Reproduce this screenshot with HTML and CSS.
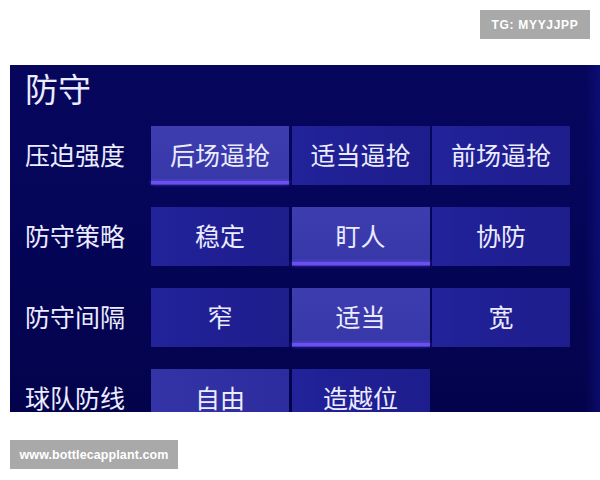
FILE: index.html
```html
<!DOCTYPE html>
<html lang="zh">
<head>
<meta charset="utf-8">
<link rel="stylesheet" href="styles.css">
</head>
<body>
<div class="top">
  <div class="badge tg">TG: MYYJJPP</div>
</div>
<div class="panel">
  <div class="title">防守</div>
  <div class="rows">
    <div class="row">
      <div class="label">压迫强度</div>
      <div class="opts">
        <div class="opt sel">后场逼抢</div>
        <div class="opt">适当逼抢</div>
        <div class="opt">前场逼抢</div>
      </div>
    </div>
    <div class="row">
      <div class="label">防守策略</div>
      <div class="opts">
        <div class="opt">稳定</div>
        <div class="opt sel">盯人</div>
        <div class="opt">协防</div>
      </div>
    </div>
    <div class="row">
      <div class="label">防守间隔</div>
      <div class="opts">
        <div class="opt">窄</div>
        <div class="opt sel">适当</div>
        <div class="opt">宽</div>
      </div>
    </div>
    <div class="row">
      <div class="label">球队防线</div>
      <div class="opts">
        <div class="opt alt">自由</div>
        <div class="opt">造越位</div>
      </div>
    </div>
  </div>
</div>
<div class="bottom">
  <div class="badge site">www.bottlecapplant.com</div>
</div>
</body>
</html>
```
FILE: styles.css
```css
html, body {
  margin: 0;
  padding: 0;
  background: #ffffff;
  width: 600px;
  height: 480px;
  overflow: hidden;
}

.top {
  height: 65px;
  box-sizing: border-box;
  padding: 10px 10px 0 0;
  display: flex;
  justify-content: flex-end;
  align-items: flex-start;
}

.badge {
  background: #a9a9a9;
  color: #ffffff;
  font-family: "Liberation Sans", Arial, sans-serif;
  display: flex;
  align-items: center;
  justify-content: center;
}

.tg {
  width: 110px;
  height: 29px;
  font-size: 12px;
  font-weight: bold;
  letter-spacing: 0.7px;
}

.site {
  width: 168px;
  height: 29px;
  font-size: 12.5px;
  font-weight: bold;
  letter-spacing: 0.1px;
}

.bottom {
  padding: 28px 0 0 10px;
}

.panel {
  margin-left: 10px;
  width: 590px;
  height: 347px;
  box-sizing: border-box;
  overflow: hidden;
  padding: 0 0 0 15px;
  background:
    linear-gradient(90deg, rgba(0,0,0,0) 97.5%, rgba(20,20,140,0.5) 100%),
    linear-gradient(180deg, #06065d 0%, #05055a 40%, #03034c 100%);
  font-family: "Noto Sans CJK SC", "Noto Sans", sans-serif;
  font-weight: 400;
  color: #ececff;
}

.title {
  margin-top: 3px;
  height: 40px;
  line-height: 40px;
  font-size: 33px;
  margin-bottom: 18px;
}

.rows {
  display: flex;
  flex-direction: column;
  gap: 22px;
}

.row {
  display: flex;
  align-items: center;
  height: 59px;
  flex: none;
}

.label {
  width: 126px;
  font-size: 25px;
  line-height: 30px;
  padding-bottom: 3px;
}

.opts {
  display: flex;
  gap: 2.5px;
}

.opt {
  position: relative;
  width: 138px;
  height: 59px;
  box-sizing: border-box;
  padding-bottom: 3px;
  display: flex;
  align-items: center;
  justify-content: center;
  font-size: 25px;
  background: linear-gradient(90deg, #22229a 0%, #1d1d8c 100%);
}

.opt.alt {
  background: linear-gradient(90deg, #3434a6 0%, #2c2c9e 100%);
}

.opt.sel {
  background: linear-gradient(180deg, #3d3db0 0%, #3737a8 100%);
}

.opt.sel::after {
  content: "";
  position: absolute;
  left: 0;
  right: 0;
  bottom: 1px;
  height: 3px;
  background: #6c4ff3;
  box-shadow: 0 0 4px rgba(120, 90, 255, 0.7);
}
```
